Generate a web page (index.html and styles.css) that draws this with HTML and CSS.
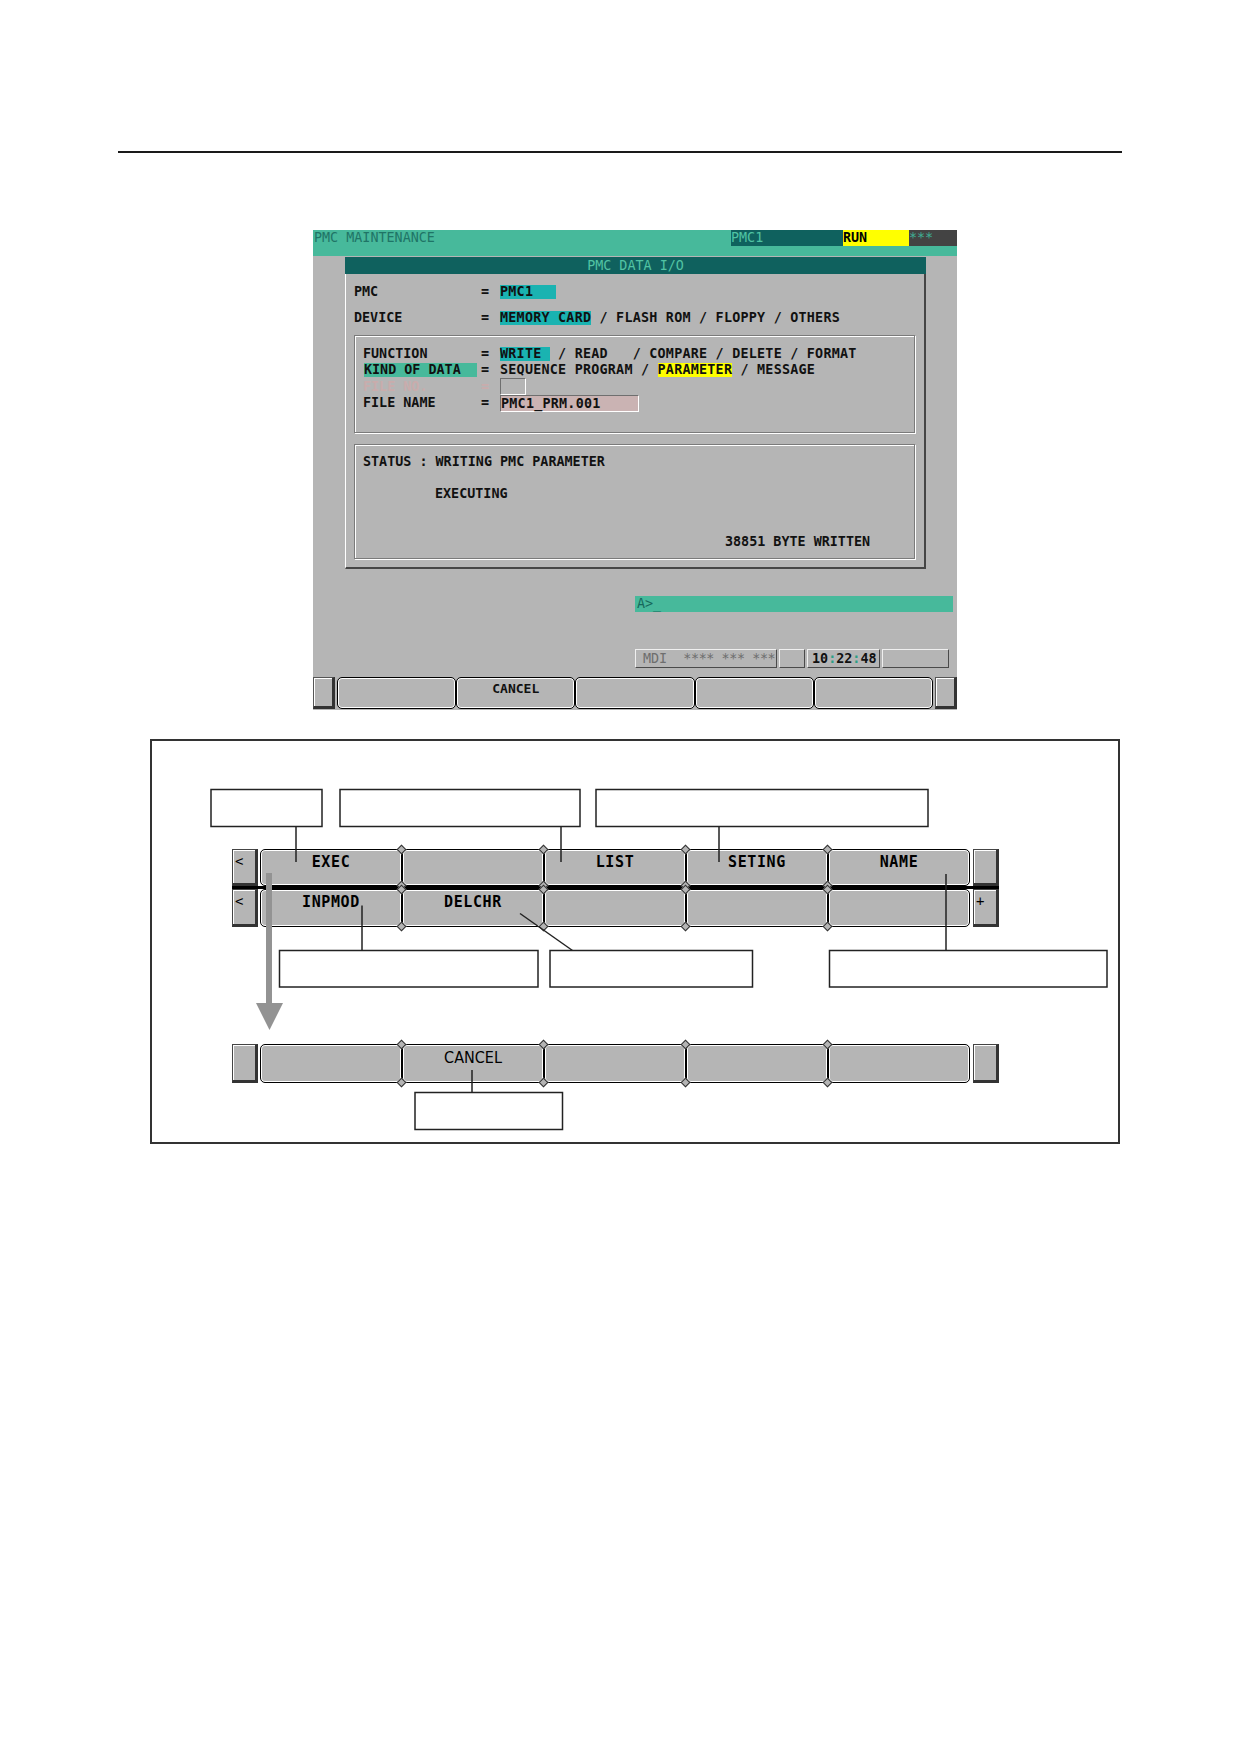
FILE: index.html
```html
<!DOCTYPE html>
<html lang="en">
<head>
    <meta charset="UTF-8">
    <title>PMC DATA I/O</title>
    <link rel="stylesheet" href="styles.css">
</head>
<body>
<div class="page">
    <hr class="rule">

    <!-- CNC screen -->
    <div class="screen">
        <div class="topbar">
            <span class="mode">PMC MAINTENANCE</span>
            <span class="cell cell-pmc">PMC1</span>
            <span class="cell cell-run">RUN</span>
            <span class="cell cell-alarm">***</span>
        </div>
        <div class="strip"></div>

        <div class="dialog">
            <div class="dialog-title">PMC DATA I/O</div>
            <div class="dialog-body">
                <div class="line"><span class="lbl">PMC</span><span class="eq">=</span><span class="val"><span class="hl cyan hl-pmc">PMC1</span></span></div>
                <div class="line gap"><span class="lbl">DEVICE</span><span class="eq">=</span><span class="val"><span class="hl cyan">MEMORY CARD</span> / FLASH ROM / FLOPPY / OTHERS</span></div>

                <div class="frame">
                    <div class="line"><span class="lbl">FUNCTION</span><span class="eq">=</span><span class="val"><span class="hl cyan">WRITE </span> / READ   / COMPARE / DELETE / FORMAT</span></div>
                    <div class="line"><span class="lbl"><span class="hl kind">KIND OF DATA</span></span><span class="eq">=</span><span class="val">SEQUENCE PROGRAM / <span class="hl yellow">PARAMETER</span> / MESSAGE</span></div>
                    <div class="line dim"><span class="lbl">FILE NO.</span><span class="eq">=</span><span class="val"><span class="field field-no"></span></span></div>
                    <div class="line"><span class="lbl">FILE NAME</span><span class="eq">=</span><span class="val"><span class="field field-name">PMC1_PRM.001</span></span></div>
                </div>

                <div class="frame status">
                    <div class="line">STATUS : WRITING PMC PARAMETER</div>
                    <div class="line exec">EXECUTING</div>
                    <div class="line bytes">38851 BYTE WRITTEN</div>
                </div>
            </div>
        </div>

        <div class="cmdline">A&gt;_</div>

        <div class="statusbar">
            <span class="sb sb-mode">MDI  <span class="stars">**** *** ***</span></span>
            <span class="sb sb-s1"></span>
            <span class="sb sb-time">10<span class="colon">:</span>22<span class="colon">:</span>48</span>
            <span class="sb sb-s2"></span>
        </div>

        <div class="softkeys">
            <span class="skey skey-side"></span>
            <span class="skey"></span>
            <span class="skey">CANCEL</span>
            <span class="skey"></span>
            <span class="skey"></span>
            <span class="skey"></span>
            <span class="skey skey-side right"></span>
        </div>
    </div>

    <!-- soft key chart -->
    <div class="diagram">
        <div class="keypad">
            <div class="krow">
                <span class="side-key">&lt;</span>
                <span class="fkey">EXEC</span>
                <span class="fkey"></span>
                <span class="fkey">LIST</span>
                <span class="fkey">SETING</span>
                <span class="fkey">NAME</span>
                <span class="side-key right"></span>
            </div>
            <div class="krow second">
                <span class="side-key">&lt;</span>
                <span class="fkey">INPMOD</span>
                <span class="fkey">DELCHR</span>
                <span class="fkey"></span>
                <span class="fkey"></span>
                <span class="fkey"></span>
                <span class="side-key right">+</span>
            </div>
        </div>

        <div class="keypad lower">
            <div class="krow">
                <span class="side-key"></span>
                <span class="fkey"></span>
                <span class="fkey">CANCEL</span>
                <span class="fkey"></span>
                <span class="fkey"></span>
                <span class="fkey"></span>
                <span class="side-key right"></span>
            </div>
        </div>

        <svg class="callouts" width="966" height="401" viewBox="0 0 966 401">
            <g fill="#fff" stroke="#222" stroke-width="1.5">
                <rect x="59" y="48.5" width="111" height="37"/>
                <rect x="188" y="48.5" width="240" height="37"/>
                <rect x="444" y="48.5" width="332" height="37"/>
                <rect x="127.5" y="209.5" width="258.5" height="36.5"/>
                <rect x="398" y="209.5" width="202.5" height="36.5"/>
                <rect x="677.5" y="209.5" width="277.5" height="36.5"/>
                <rect x="263" y="351.5" width="147.5" height="37"/>
            </g>
            <g stroke="#222" stroke-width="1.5" fill="none">
                <line x1="144" y1="85.5" x2="144" y2="121"/>
                <line x1="409" y1="85.5" x2="409" y2="121"/>
                <line x1="567" y1="85.5" x2="567" y2="121"/>
                <line x1="794" y1="133" x2="794" y2="209.5"/>
                <line x1="210" y1="164.5" x2="210" y2="209.5"/>
                <line x1="368" y1="172.5" x2="420.5" y2="209.5"/>
                <line x1="320" y1="329" x2="320" y2="351.5"/>
            </g>
            <!-- page change arrow -->
            <g fill="#939393">
                <rect x="114" y="132" width="6" height="131"/>
                <polygon points="104,262 131,262 117.5,289"/>
            </g>
        </svg>
    </div>
</div>
</body>
</html>
```

FILE: styles.css
```css
body {
    margin: 0;
    background: #fff;
}

.page {
    width: 1239px;
    padding-top: 151px;
}

.rule {
    width: 1004px;
    height: 2px;
    margin: 0 0 0 118px;
    border: 0;
    background: #1a1a1a;
}

/* CNC screen */
.screen {
    display: flex;
    flex-direction: column;
    width: 644px;
    height: 480px;
    margin: 77px 0 0 313px;
    background: #b5b5b5;
    color: #111;
    font: bold 13.4px/17px "DejaVu Sans Mono", monospace;
}

.topbar {
    display: flex;
    height: 16px;
    line-height: 16px;
    background: #47b99b;
    font-weight: normal;
}

.mode {
    flex: 1;
    padding-left: 1px;
    color: #1f7466;
}

.cell {
    width: 112px;
}

.cell-pmc {
    background: #0f615e;
    color: #4fc3a3;
}

.cell-run {
    width: 66px;
    background: #ffff00;
    color: #000;
    font-weight: bold;
}

.cell-alarm {
    width: 48px;
    background: #434343;
    color: #3fae93;
}

.strip {
    height: 10px;
    margin-bottom: 1px;
    background: #47b99b;
}

.dialog {
    width: 581px;
    margin-left: 32px;
}

.dialog-title {
    height: 17px;
    line-height: 17px;
    background: #0f615e;
    color: #52c3a3;
    text-align: center;
    font-weight: normal;
}

.dialog-body {
    padding: 9px 9px 8px 8px;
    border-left: 1px solid #fff;
    border-right: 2px solid #454545;
    border-bottom: 2px solid #454545;
}

.line {
    display: flex;
    align-items: center;
    height: 17px;
    white-space: pre;
}

.line.gap {
    margin-top: 9px;
}

.lbl {
    width: 127px;
}

.eq {
    width: 19px;
}

.val {
    letter-spacing: .23px;
}

.hl {
    display: inline-block;
    line-height: 14px;
    vertical-align: middle;
}

.hl-pmc {
    width: 56px;
}

.cyan {
    background: #1ab3b1;
}

.yellow {
    background: #ffff00;
}

.kind {
    width: 113px;
    margin-left: 1px;
    background: #47b99b;
}

.frame {
    box-sizing: border-box;
    height: 98px;
    margin-top: 9px;
    padding: 9px 8px 0;
    border: 1px solid #7b7b7b;
    box-shadow: inset 1px 1px 0 #fff, 1px 1px 0 #fff;
}

.frame .lbl {
    width: 118px;
}

.frame .line {
    height: 16.5px;
}

.dim {
    color: #c9acac;
}

.field {
    display: inline-block;
    box-sizing: border-box;
    height: 17px;
    vertical-align: middle;
    border: 1px solid;
    border-color: #6f6f6f #fff #fff #6f6f6f;
}

.field-no {
    width: 26px;
}

.field-name {
    width: 139px;
    margin-top: 2px;
    line-height: 15px;
    background: #cab3b3;
    color: #111;
}

.status {
    height: 115px;
    margin-top: 11px;
    padding-top: 8px;
}

.status .exec {
    margin-top: 15.5px;
    padding-left: 72px;
}

.status .bytes {
    margin-top: 31.5px;
    padding-left: 362px;
}

.cmdline {
    width: 316px;
    height: 16px;
    margin: 27px 0 0 322px;
    padding-left: 2px;
    line-height: 16px;
    background: #47b99b;
    color: #16685c;
    font-weight: normal;
}

.statusbar {
    display: flex;
    gap: 2px;
    height: 19px;
    margin: 36.5px 0 0 322px;
    line-height: 17px;
}

.sb {
    box-sizing: border-box;
    border: 1px solid;
    border-color: #efefef #4a4a4a #4a4a4a #efefef;
    white-space: pre;
}

.sb-mode {
    width: 142px;
    padding-left: 7px;
    color: #6e6e6e;
    font-weight: normal;
}

.stars {
    letter-spacing: -.4px;
}

.sb-s1 {
    width: 26px;
}

.sb-time {
    width: 73px;
    padding-left: 4px;
}

.colon {
    color: #2a9f86;
}

.sb-s2 {
    width: 67px;
}

.softkeys {
    display: flex;
    height: 32.5px;
    margin-top: 9px;
}

.skey {
    box-sizing: border-box;
    width: 119.2px;
    padding-top: 3px;
    border: 1px solid #000;
    border-radius: 5px;
    box-shadow: inset 0 0 0 1px #fff;
    font-size: 13px;
    line-height: 16px;
    text-align: center;
}

.skey-side {
    width: 22px;
    margin-right: 2px;
    border-radius: 0;
    border-width: 1px 3px 3px 1px;
    border-color: #555 #333 #333 #555;
    box-shadow: inset 1px 1px 0 #fff;
}

.skey-side.right {
    margin: 0 0 0 2px;
}

/* soft key chart */
.diagram {
    position: relative;
    box-sizing: border-box;
    width: 970px;
    height: 405px;
    margin: 29px 0 0 150px;
    padding: 108px 0 0 80px;
    border: 2px solid #333;
}

.keypad {
    display: flex;
    flex-direction: column;
    width: 767px;
}

.keypad.lower {
    margin-top: 117px;
}

.krow {
    display: flex;
    box-sizing: border-box;
    height: 37px;
}

.krow.second {
    height: 41px;
    border-top: 3px solid #000;
}

.lower .krow {
    height: 39px;
}

.side-key {
    box-sizing: border-box;
    width: 26px;
    margin-right: 2px;
    padding: 3px 0 0 2px;
    border-style: solid;
    border-width: 1px 3px 3px 1px;
    border-color: #444 #333 #333 #444;
    box-shadow: inset 1px 1px 0 #fff;
    background: #b5b5b5;
    font: 14px/16px "DejaVu Sans Mono", monospace;
}

.side-key.right {
    margin: 0 0 0 3px;
}

.fkey {
    position: relative;
    box-sizing: border-box;
    width: 142px;
    padding-top: 4px;
    border: 1px solid #000;
    border-radius: 5px;
    box-shadow: inset 0 0 0 1px #fff;
    background: #b5b5b5;
    font: bold 15px/16px "DejaVu Sans Mono", monospace;
    letter-spacing: .6px;
    text-align: center;
}

.fkey + .fkey::before,
.fkey + .fkey::after {
    content: "";
    position: absolute;
    left: -5px;
    width: 5px;
    height: 5px;
    border: 1px solid #333;
    background: #b5b5b5;
    transform: rotate(45deg);
}

.fkey + .fkey::before {
    top: -4px;
}

.fkey + .fkey::after {
    bottom: -4px;
}

.lower .fkey {
    padding-top: 5px;
    font: 16px/16px "DejaVu Sans Condensed", sans-serif;
    letter-spacing: 0;
}

.callouts {
    position: absolute;
    top: 0;
    left: 0;
    pointer-events: none;
}
```
